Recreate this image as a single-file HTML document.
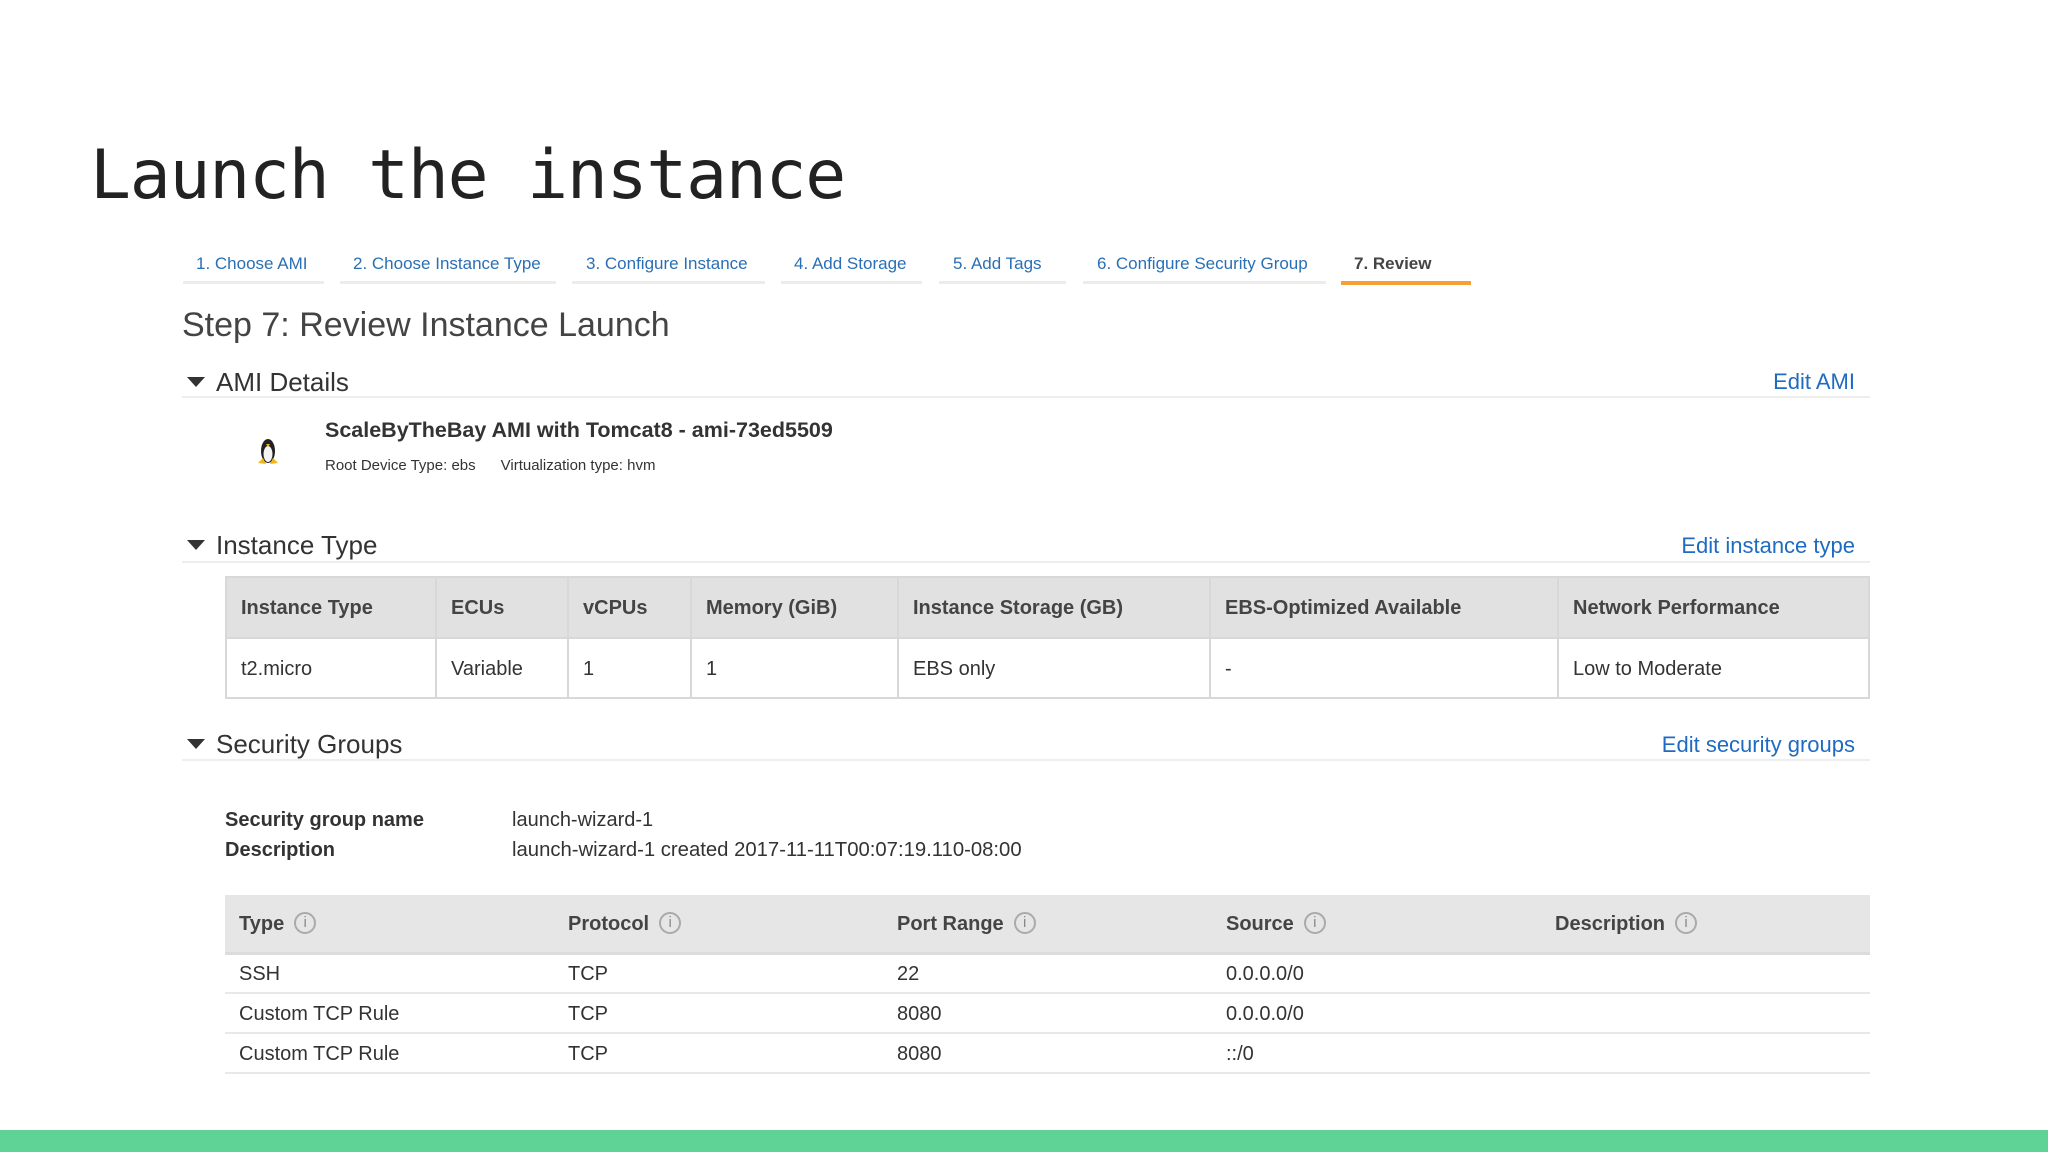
<!DOCTYPE html>
<html><head><meta charset="utf-8"><style>
*{margin:0;padding:0;box-sizing:border-box}
body{width:2048px;height:1152px;background:#fff;position:relative;overflow:hidden;font-family:"Liberation Sans",Arial,sans-serif;color:#333}
.a{position:absolute;white-space:nowrap}
.title{font-family:"DejaVu Sans Mono","Liberation Mono",monospace;font-size:68px;left:90px;top:136px;color:#222;letter-spacing:-1.2px}
.tab{font-size:17px;color:#2a6fb5;top:254px}
.ul{position:absolute;top:281px;height:3px;background:#ececec}
.h2{font-size:34px;color:#444;left:182px;top:306px}
.sec{font-size:26px;color:#333;left:216px}
.tri{position:absolute;left:187px;width:0;height:0;border-left:9px solid transparent;border-right:9px solid transparent;border-top:10px solid #333}
.line{position:absolute;left:182px;width:1688px;height:2px;background:#eeeeee}
.edit{font-size:22px;color:#1f6bc1;right:193px}
table{position:absolute;border-collapse:collapse;font-size:20px}
.t1{left:225px;top:576px;width:1645px}
.t1 td{border:2px solid #d8d8d8;padding:2px 14px 0;height:60px;color:#333}
.t1 tr:first-child td{background:#e1e1e1;font-weight:bold;height:61px;color:#444}
.t2{left:225px;top:895px;width:1645px}
.t2 td{padding:3px 14px 0;height:40px;border-bottom:2px solid #e8e8e8;color:#333;vertical-align:middle}
.t2 tr:first-child td{background:#e6e6e6;font-weight:bold;height:58px;color:#444;border-bottom:3px solid #dcdcdc}
.i{display:inline-block;width:22px;height:22px;border:2px solid #aaa;border-radius:50%;font-size:15px;font-weight:normal;text-align:center;line-height:18px;color:#888;margin-left:10px;vertical-align:middle;position:relative;top:-2px}
</style></head><body>
<div class="a title">Launch the instance</div>

<div class="a tab" style="left:196px">1. Choose AMI</div>
<div class="a tab" style="left:353px">2. Choose Instance Type</div>
<div class="a tab" style="left:586px">3. Configure Instance</div>
<div class="a tab" style="left:794px">4. Add Storage</div>
<div class="a tab" style="left:953px">5. Add Tags</div>
<div class="a tab" style="left:1097px">6. Configure Security Group</div>
<div class="a tab" style="left:1354px;color:#444;font-weight:bold">7. Review</div>
<div class="ul" style="left:183px;width:141px"></div>
<div class="ul" style="left:340px;width:216px"></div>
<div class="ul" style="left:572px;width:193px"></div>
<div class="ul" style="left:781px;width:141px"></div>
<div class="ul" style="left:939px;width:127px"></div>
<div class="ul" style="left:1083px;width:243px"></div>
<div class="ul" style="left:1341px;width:130px;background:#f5a033;height:4px"></div>

<div class="a h2">Step 7: Review Instance Launch</div>

<div class="tri" style="top:377px"></div>
<div class="a sec" style="top:367px">AMI Details</div>
<div class="a edit" style="top:369px">Edit AMI</div>
<div class="line" style="top:396px"></div>
<svg class="a" style="left:256px;top:436px" width="24" height="30" viewBox="0 0 24 30">
<ellipse cx="12" cy="15" rx="7" ry="12" fill="#222"/><ellipse cx="12" cy="18" rx="4.5" ry="8" fill="#f4f4f4"/>
<path d="M2 27 L7 22 L10 28 Z M22 27 L17 22 L14 28 Z" fill="#f2b619"/><path d="M10 8 L14 8 L12 11Z" fill="#f2b619"/></svg>
<div class="a" style="left:325px;top:418px;font-size:21.5px;font-weight:bold;color:#333">ScaleByTheBay AMI with Tomcat8 - ami-73ed5509</div>
<div class="a" style="left:325px;top:457px;font-size:15px;color:#333">Root Device Type: ebs&nbsp;&nbsp;&nbsp;&nbsp;&nbsp;&nbsp;Virtualization type: hvm</div>

<div class="tri" style="top:540px"></div>
<div class="a sec" style="top:530px">Instance Type</div>
<div class="a edit" style="top:533px">Edit instance type</div>
<div class="line" style="top:561px"></div>
<table class="t1">
<colgroup><col style="width:210px"><col style="width:132px"><col style="width:123px"><col style="width:207px"><col style="width:312px"><col style="width:348px"><col></colgroup>
<tr><td>Instance Type</td><td>ECUs</td><td>vCPUs</td><td>Memory (GiB)</td><td>Instance Storage (GB)</td><td>EBS-Optimized Available</td><td>Network Performance</td></tr>
<tr><td>t2.micro</td><td>Variable</td><td>1</td><td>1</td><td>EBS only</td><td>-</td><td>Low to Moderate</td></tr>
</table>

<div class="tri" style="top:739px"></div>
<div class="a sec" style="top:729px">Security Groups</div>
<div class="a edit" style="top:732px">Edit security groups</div>
<div class="line" style="top:759px"></div>

<div class="a" style="left:225px;top:809px;font-size:20px;font-weight:bold">Security group name</div>
<div class="a" style="left:512px;top:809px;font-size:20px">launch-wizard-1</div>
<div class="a" style="left:225px;top:839px;font-size:20px;font-weight:bold">Description</div>
<div class="a" style="left:512px;top:839px;font-size:20.3px">launch-wizard-1 created 2017-11-11T00:07:19.110-08:00</div>

<table class="t2">
<colgroup><col style="width:329px"><col style="width:329px"><col style="width:329px"><col style="width:329px"><col></colgroup>
<tr><td>Type<span class="i">i</span></td><td>Protocol<span class="i">i</span></td><td>Port Range<span class="i">i</span></td><td>Source<span class="i">i</span></td><td>Description<span class="i">i</span></td></tr>
<tr><td>SSH</td><td>TCP</td><td>22</td><td>0.0.0.0/0</td><td></td></tr>
<tr><td>Custom TCP Rule</td><td>TCP</td><td>8080</td><td>0.0.0.0/0</td><td></td></tr>
<tr><td>Custom TCP Rule</td><td>TCP</td><td>8080</td><td>::/0</td><td></td></tr>
</table>

<div style="position:absolute;left:0;top:1130px;width:2048px;height:22px;background:#5fd296"></div>
</body></html>
